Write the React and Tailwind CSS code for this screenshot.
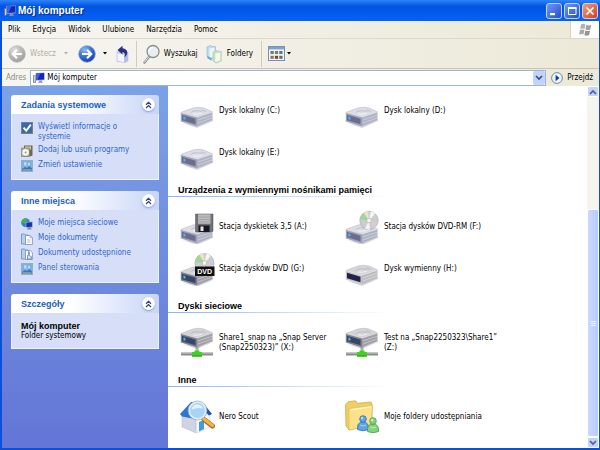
import { useId } from 'react';

/* ---------- Toolbar and title bar icons ---------- */

function ComputerIcon({ className }) {
    return (
        <svg viewBox="0 0 12 12" className={className} aria-hidden="true">
            <path d="M0.5 3.5h2v7h-2z" fill="#c9cfe0" stroke="#56607c" strokeWidth=".6" />
            <path d="M2.5 1l9-.6v7.900L2.500 8.800z" fill="#a9b7e4" />
            <path d="M3.300 1.500l7.900-.5v6.500l-7.900.5z" fill="#1226b8" />
            <path d="M3.300 1.500l4-.3-2.600 6.600-1.400.1z" fill="#3f5fe0" />
            <path d="M6 8.4h3v1.4l1.5 1H4.5L6 9.8z" fill="#8c97b8" />
        </svg>
    );
}

function RoundArrow({ back }) {
    const id = useId();
    return (
        <svg viewBox="0 0 18 18" className="size-[18px] shrink-0" aria-hidden="true">
            <defs>
                <radialGradient id={id} cx=".35" cy=".25" r=".8">
                    <stop offset="0" stopColor={back ? '#e0e0de' : '#8db8f5'} />
                    <stop offset=".5" stopColor={back ? '#b9b9b6' : '#3a72d8'} />
                    <stop offset="1" stopColor={back ? '#9d9d9a' : '#123f9f'} />
                </radialGradient>
            </defs>
            <circle cx="9" cy="9" r="8.3" fill={`url(#${id})`} stroke={back ? '#b4b4b0' : '#7d9bd0'} strokeWidth=".7" />
            <path
                d={back ? 'M14 9H5M9 4.8L4.8 9 9 13.2' : 'M4 9h9M9 4.8L13.2 9 9 13.2'}
                fill="none"
                stroke="#fff"
                strokeWidth="2.2"
            />
        </svg>
    );
}

function Caret({ className }) {
    return (
        <svg viewBox="0 0 4 3" className={`h-[3px] w-1 shrink-0 ${className ?? ''}`} aria-hidden="true">
            <path d="M0 0h4L2 2.6z" fill="currentColor" />
        </svg>
    );
}

function UpIcon() {
    return (
        <svg viewBox="0 0 15 18" className="h-[18px] w-[15px]" aria-hidden="true">
            <path d="M2 7l3-1 8 1.500v8.500l-3 1.500-8-1z" fill="#c3cce8" stroke="#a5b0d4" strokeWidth=".5" />
            <path d="M2.500 8.500L9 9.500v7.500l-6.500-1z" fill="#f4f6fc" />
            <path d="M9.500 9.500l3-1v7l-3 1.500z" fill="#aebbe0" />
            <path d="M9.500 12.500C10.500 9 9.500 7.200 7.500 7v2.400L2.500 5 7.500.8v2.400c5.500.6 6.500 5.300 2 9.300z" fill="#2b2f86" />
        </svg>
    );
}

function SearchIcon() {
    return (
        <svg viewBox="0 0 17 20" className="h-5 w-[17px]" aria-hidden="true">
            <path d="M1.500 18.500l5-6.200" stroke="#9a9a9a" strokeWidth="2.600" strokeLinecap="round" />
            <path d="M1.600 18l4.600-5.600" stroke="#dcdcdc" strokeWidth="1" strokeLinecap="round" />
            <circle cx="10" cy="7.500" r="6" fill="#e9eef2" stroke="#8b8f93" strokeWidth="1.300" />
            <path d="M6.200 7.500A4 4 0 0 1 10 3.600" stroke="#fff" strokeWidth="1.400" fill="none" />
        </svg>
    );
}

function FoldersIcon() {
    return (
        <svg viewBox="0 0 17 20" className="h-5 w-[17px]" aria-hidden="true">
            <path d="M1 3l4-1.600 1 1.200h3.500v11L5 15 1 13z" fill="#bcdcf0" stroke="#8ab4d4" strokeWidth=".6" />
            <path d="M3.500 4.500l5-1v9l-5 1.700z" fill="#eaf6fd" />
            <path d="M1.500 12l4 2v2.800l-4-2.600z" fill="#6fa4d6" />
            <path d="M7 8.200l4-2 1 1.200h3.200v9.600L10 19l-3-2z" fill="#c5e2bd" stroke="#a3c69c" strokeWidth=".6" />
            <path d="M9.300 9.600l5-1v7.800l-5 1.700z" fill="#f1faee" />
        </svg>
    );
}

function ViewsIcon() {
    return (
        <svg viewBox="0 0 17 15" className="h-[15px] w-[17px]" aria-hidden="true">
            <rect x=".5" y=".5" width="16" height="14" fill="#f4f3ea" stroke="#7a8fb8" />
            <rect x="1" y="1" width="15" height="2.400" fill="#7fa0d8" />
            <rect x="2.500" y="5" width="3.200" height="3" fill="#5f7f72" />
            <rect x="6.900" y="5" width="3.200" height="3" fill="#6c8a5e" />
            <rect x="11.300" y="5" width="3.200" height="3" fill="#5b7593" />
            <rect x="2.500" y="9.800" width="3.200" height="3" fill="#8a6b70" />
            <rect x="6.900" y="9.800" width="3.200" height="3" fill="#7a3f3f" />
            <rect x="11.300" y="9.800" width="3.200" height="3" fill="#5c6a7c" />
        </svg>
    );
}

function WindowsFlag() {
    return (
        <svg viewBox="0 0 15 14" className="h-3.5 w-[15px]" aria-hidden="true">
            <path d="M3 1.400q2.200-1.200 4.400 0L6.600 6q-2-1.200-4.400 0z" fill="#b2b2b2" />
            <path d="M8.300 1.800q2.400 1.200 5 0l-1 4.600q-2.400 1.300-4.800 0z" fill="#a2a2a2" />
            <path d="M2 7q2.200-1.200 4.400 0l-.9 4.600q-2.200-1.200-4.500 0z" fill="#a8a8a8" />
            <path d="M7.300 7.400q2.400 1.200 4.800 0l-1 4.600q-2.400 1.300-4.700 0z" fill="#959595" />
        </svg>
    );
}

/* ---------- Sidebar icons ---------- */

function TaskIcon({ kind }) {
    return (
        <svg viewBox="0 0 12 12" className="size-3 shrink-0" aria-hidden="true">
            {kind === 'info' && (
                <>
                    <rect x=".5" y=".5" width="11" height="11" fill="#3b6aa8" stroke="#6d8294" />
                    <path d="M2.600 5.600l2.600 3.200 4.600-6.200" fill="none" stroke="#fff" strokeWidth="1.900" />
                </>
            )}
            {kind === 'programs' && (
                <>
                    <path d="M3 .5h8.500v10L9 11.500H3z" fill="#6c6a4e" />
                    <path d="M4 1.500h6v3H4z" fill="#d9cf96" />
                    <rect x="0" y="3" width="8.600" height="8.600" fill="#a9a79c" stroke="#77756a" strokeWidth=".5" />
                    <circle cx="4.600" cy="7.400" r="3.300" fill="#f3f5ee" />
                    <circle cx="4.600" cy="7.400" r=".9" fill="#8a9a80" />
                </>
            )}
            {kind === 'settings' && (
                <>
                    <rect x=".5" y=".5" width="11" height="11" fill="#7fb0e2" stroke="#8cb0d4" />
                    <path d="M1 9l3-2 2 1 2.400-2L11 8.600V11H1z" fill="#3f74b6" />
                    <path d="M3 2.200h2.600v3.200H3zM7 3h2v2.400H7z" fill="#b9daf4" />
                    <path d="M1.500 10h9" stroke="#c5c3a0" />
                </>
            )}
            {kind === 'network' && (
                <>
                    <circle cx="4.600" cy="4.600" r="4.400" fill="#2d7fd0" />
                    <path d="M2 1.400c2-1.400 4-1 5 .2L5 3.800 4.600 6 2.600 5 .6 5.600C.2 4 .8 2.400 2 1.400z" fill="#49b14a" />
                    <path d="M5 4.400l6.400-.6v5.400L5 9.600z" fill="#1c2fa6" stroke="#b8c4e6" strokeWidth=".6" />
                    <path d="M7 9.600h2.600l1 1.900H6z" fill="#7784ac" />
                </>
            )}
            {(kind === 'documents' || kind === 'shared') && (
                <>
                    <path d="M.5 1h3l1 1H7v9H.5z" fill="#b4cdf2" stroke="#5c80bd" strokeWidth=".7" />
                    <path d="M4.500 2.500h4.600l2.300 2.200v6.800H4.500z" fill="#fff" stroke="#6c83ad" strokeWidth=".7" />
                    {kind === 'documents' ? (
                        <path d="M9 2.600v2.200h2.300M6 7h3.600M6 9h3.600" fill="none" stroke="#8ea3c9" strokeWidth=".7" />
                    ) : (
                        <path d="M6.400 11V7.600l1-.3V3.600l1 .2v4l2 .8V11z" fill="#d5e2f7" stroke="#4e72b4" strokeWidth=".7" />
                    )}
                </>
            )}
        </svg>
    );
}

/* ---------- Drive icons ---------- */

const driveTones = {
    disk: { top: '#dcdde5', side: '#b0b2c6', front: '#a0a2b8', slot: '#6a6e8c' },
    removable: { top: '#d6d6d8', side: '#bdbdc1', front: '#c6c6cb', slot: '#22224a' },
    network: { top: '#d4d4d6', side: '#a0a0a6', front: '#808089', slot: '#36466b' },
};

function DriveBody({ tone = 'disk', y = 0 }) {
    const c = driveTones[tone];
    return (
        <g transform={`translate(0 ${y})`}>
            <path d="M2 30l15 5 16-7V26L17 32z" fill="#8d8fa2" opacity=".35" />
            <path d="M.8 19.500L13 15q6-1.400 11 0l8.500 4L17 24z" fill={c.top} stroke="#b9bac8" strokeWidth=".6" />
            <path d="M.8 19.500L17 24v9.500L.8 28.500z" fill={c.front} />
            <path d="M17 24l15.500-5v8L17 33.500z" fill={c.side} />
            <path d="M18 27l14-4.700M18 30l14-5" stroke="#fff" strokeWidth=".8" opacity=".45" />
            <path d="M2 21.800l13.500 3.900v5.500L2 27.300z" fill={c.slot} />
            <path d="M.8 19.500L17 24l15.500-5" fill="none" stroke="#fff" strokeWidth=".7" opacity=".7" />
            {tone !== 'removable' && <path d="M3.400 23.500l2 .6v2.700l-2-.6z" fill="#53b6ec" />}
            <path d="M11 19.800q0-1.800 5-2t6 1.200" fill="none" stroke="#a9abbb" strokeWidth=".6" />
            <path d="M13 21q5 1 9-1" fill="none" stroke="#f7f7fa" strokeWidth=".8" />
            <path d="M21 16.700l5 1.800" stroke="#a8aab8" strokeWidth=".6" />
        </g>
    );
}

function Disc({ cx, cy, r }) {
    return (
        <g>
            <circle cx={cx} cy={cy} r={r} fill="#cbcdcf" stroke="#a1a4a8" strokeWidth=".6" />
            <path d={`M${cx} ${cy}l${-r} -1A${r} ${r} 0 0 1 ${cx - 5} ${cy - r + 1.6}z`} fill="#a5d39b" />
            <path d={`M${cx} ${cy}L${cx - 5} ${cy - r + 1.6}A${r} ${r} 0 0 1 ${cx - 1} ${cy - r}z`} fill="#ece5bd" />
            <path d={`M${cx} ${cy}L${cx + 2} ${cy - r}A${r} ${r} 0 0 1 ${cx + 6} ${cy - r + 2.5}z`} fill="#f6f6f6" />
            <path d={`M${cx} ${cy}L${cx + r - 0.5} ${cy + 2}A${r} ${r} 0 0 1 ${cx + 5} ${cy + r - 1.8}z`} fill="#dccbd5" />
            <path d={`M${cx} ${cy}L${cx + 1} ${cy + r}A${r} ${r} 0 0 1 ${cx - 4} ${cy + r - 1.2}z`} fill="#f3f3f3" />
            <circle cx={cx} cy={cy} r="2.300" fill="#f5f5f5" stroke="#a9abae" strokeWidth=".6" />
        </g>
    );
}

function NetworkDrive() {
    return (
        <>
            <path d="M1 27.500h32v3H1z" fill="#8c8c8c" />
            <path d="M1 27.500h32v1H1z" fill="#c8c8c8" />
            <path d="M15.500 20h3v7h-3z" fill="#b5b5b5" />
            <path d="M14.500 25.500h5V27h2.500v4.500H12V27h2.500z" fill="#3fd21f" />
            <path d="M12 30.500h10v1H12z" fill="#239a10" />
            <DriveBody tone="network" y={-11} />
        </>
    );
}

function NeroScout() {
    return (
        <>
            <path d="M2 15l14 5v14L2 28z" fill="#d0d4e2" stroke="#a9afc4" strokeWidth=".4" />
            <path d="M16 20l14-6v14l-13 6z" fill="#f7f8fb" stroke="#b5bacb" strokeWidth=".4" />
            <path d="M19 23l5-2v9l-5 2.500z" fill="#3d9be2" />
            <path d="M11 3L0 15l2 2.500L15 20l5-5L24 5z" fill="#2e77cf" />
            <path d="M11 3l13 2 8 10-3 1.500-9-9z" fill="#1d57ad" />
            <path d="M24 20.500l8.500 6.500" stroke="#a86f1c" strokeWidth="5" strokeLinecap="round" />
            <path d="M24 20l8.500 6.500" stroke="#f0b548" strokeWidth="3.400" strokeLinecap="round" />
            <circle cx="17.500" cy="11.500" r="8.400" fill="#a9d5f5" stroke="#e2eaf3" strokeWidth="2" />
            <circle cx="17.500" cy="11.500" r="9.500" fill="none" stroke="#7f9fc6" strokeWidth=".6" />
            <path d="M11.500 10.500q1-5 6-5 4.500.5 5.500 4-5.500-1.500-11.500 1z" fill="#e3f3fe" />
        </>
    );
}

function Person({ x, y, light, dark }) {
    return (
        <g transform={`translate(${x} ${y})`}>
            <path d="M-5.500 10.500q-.8-7.500 5.500-7.500t5.500 7.500q-5.500 2.500-11 0z" fill={light} stroke={dark} strokeWidth=".8" />
            <circle cx="0" cy="0" r="3.300" fill={light} stroke={dark} strokeWidth=".8" />
            <circle cx="-1" cy="-1" r="1.200" fill="#fff" opacity=".6" />
            <path d="M-3 6q3 2 6 0" fill="none" stroke="#fff" strokeWidth=".8" opacity=".6" />
        </g>
    );
}

function SharedFolder() {
    return (
        <>
            <path d="M.5 6L3 2.800l7.500-1 2 2.500L26 3l1 2v21L4 31 1 27z" fill="#f0cf62" stroke="#cfa23a" strokeWidth=".7" />
            <path d="M4 9.500L27.500 6 26 26.500 4 31z" fill="#fbe28a" stroke="#dcb551" strokeWidth=".6" />
            <path d="M5 11l21-3.200" stroke="#fff8d6" strokeWidth="1" />
            <Person x={18} y={20} light="#5ba6e8" dark="#2d6db8" />
            <Person x={28} y={22} light="#86d27f" dark="#4b9a4c" />
        </>
    );
}

function PlaceIcon({ kind }) {
    return (
        <svg viewBox="0 0 35 35" className="size-[35px] shrink-0" aria-hidden="true">
            {kind === 'disk' && <DriveBody />}
            {kind === 'removable' && <DriveBody tone="removable" />}
            {kind === 'floppy' && (
                <>
                    <DriveBody y={1} />
                    <path d="M15.500 5h17.500v17l-1 1H15.500z" fill="#6f7073" stroke="#55565a" strokeWidth=".5" />
                    <path d="M18 5.300h12.500v9.500H18z" fill="#b9babd" />
                    <path d="M18 8h12.500M18 10.500h12.500M18 13h12.500" stroke="#98999d" strokeWidth=".6" />
                    <path d="M18.500 16.500h11V23h-11z" fill="#17181b" />
                    <path d="M20.500 17.500h3V22h-3z" fill="#e8e8ea" />
                </>
            )}
            {kind === 'dvd-rm' && (
                <>
                    <DriveBody y={1} />
                    <Disc cx={24} cy={11.5} r={9.2} />
                </>
            )}
            {kind === 'dvd' && (
                <>
                    <DriveBody tone="network" y={1} />
                    <Disc cx={24.5} cy={12} r={9.5} />
                    <rect x="15" y="15.500" width="19.500" height="9.500" fill="#111" />
                    <text x="24.700" y="22.800" textAnchor="middle" fill="#fff" fontSize="7" fontWeight="700" fontFamily="Liberation Sans, sans-serif">
                        DVD
                    </text>
                </>
            )}
            {kind === 'network' && <NetworkDrive />}
            {kind === 'nero' && <NeroScout />}
            {kind === 'shared' && <SharedFolder />}
        </svg>
    );
}

/* ---------- Data ---------- */

const menus = ['Plik', 'Edycja', 'Widok', 'Ulubione', 'Narzędzia', 'Pomoc'];

const systemTasks = [
    { icon: 'info', label: 'Wyświetl informacje o systemie' },
    { icon: 'programs', label: 'Dodaj lub usuń programy' },
    { icon: 'settings', label: 'Zmień ustawienie' },
];

const otherPlaces = [
    { icon: 'network', label: 'Moje miejsca sieciowe' },
    { icon: 'documents', label: 'Moje dokumenty' },
    { icon: 'shared', label: 'Dokumenty udostępnione' },
    { icon: 'settings', label: 'Panel sterowania' },
];

const groups = [
    {
        items: [
            { icon: 'disk', label: 'Dysk lokalny (C:)' },
            { icon: 'disk', label: 'Dysk lokalny (D:)' },
            { icon: 'disk', label: 'Dysk lokalny (E:)' },
        ],
    },
    {
        title: 'Urządzenia z wymiennymi nośnikami pamięci',
        items: [
            { icon: 'floppy', label: 'Stacja dyskietek 3,5 (A:)' },
            { icon: 'dvd-rm', label: 'Stacja dysków DVD-RM (F:)' },
            { icon: 'dvd', label: 'Stacja dysków DVD (G:)' },
            { icon: 'removable', label: 'Dysk wymienny (H:)' },
        ],
    },
    {
        title: 'Dyski sieciowe',
        items: [
            { icon: 'network', label: 'Share1_snap na „Snap Server (Snap2250323)” (X:)' },
            { icon: 'network', label: 'Test na „Snap2250323\\Share1” (Z:)' },
        ],
    },
    {
        title: 'Inne',
        items: [
            { icon: 'nero', label: 'Nero Scout' },
            { icon: 'shared', label: 'Moje foldery udostępniania' },
        ],
    },
];

const boldText = "font-['Liberation_Sans',sans-serif] text-[9px] font-bold";

/* ---------- Window parts ---------- */

function TitleBar() {
    const button = 'flex size-4 items-center justify-center rounded-[3px] border border-[#c4d4f8]';
    return (
        <header className="flex h-[21px] shrink-0 items-center bg-linear-to-b from-[#2c86f8] via-[#0353e0] via-30% to-[#0462f8] pt-px pr-[2px] pl-1">
            <ComputerIcon className="size-3" />
            <h1 className="ml-[2px] grow font-['Liberation_Sans',sans-serif] text-[10px] font-bold text-white [text-shadow:1px_1px_1px_#0a2a80]">
                Mój komputer
            </h1>
            <div className="flex gap-[2px]">
                <button aria-label="Minimalizuj" className={`${button} bg-linear-to-br from-[#6f97f2] to-[#1f4fd0]`}>
                    <svg viewBox="0 0 12 12" className="size-3" aria-hidden="true">
                        <path d="M2 8h5v2.200H2z" fill="#fff" />
                    </svg>
                </button>
                <button aria-label="Maksymalizuj" className={`${button} bg-linear-to-br from-[#6f97f2] to-[#1f4fd0]`}>
                    <svg viewBox="0 0 12 12" className="size-3" aria-hidden="true">
                        <path d="M2.500 3h7.500v6.500H2.500z" fill="none" stroke="#fff" />
                        <path d="M2 2h8.500v2H2z" fill="#fff" />
                    </svg>
                </button>
                <button aria-label="Zamknij" className={`${button} bg-linear-to-br from-[#f09a7c] to-[#cf3f18]`}>
                    <svg viewBox="0 0 12 12" className="size-3" aria-hidden="true">
                        <path d="M2.500 2.500l7 7M9.500 2.500l-7 7" stroke="#fff" strokeWidth="1.700" />
                    </svg>
                </button>
            </div>
        </header>
    );
}

function MenuBar() {
    return (
        <nav className="flex h-[18px] shrink-0 border-b border-[#dcd9cb]">
            <div className="flex grow items-center gap-3 pl-[6px]">
                {menus.map((menu) => (
                    <button key={menu}>{menu}</button>
                ))}
            </div>
            <div className="flex w-[29px] items-center justify-center border-l border-[#d6d3c4] bg-white">
                <WindowsFlag />
            </div>
        </nav>
    );
}

function ToolBar() {
    return (
        <div className="flex h-[30px] shrink-0 items-center border-b border-[#c9c6b6] pl-[6px]">
            <button className="flex items-center gap-1 text-[#b0ada0]" disabled>
                <RoundArrow back />
                Wstecz
                <Caret className="ml-1" />
            </button>
            <button aria-label="Dalej" className="ml-[10px] flex items-center gap-[7px]">
                <RoundArrow />
                <Caret />
            </button>
            <button aria-label="W górę" className="ml-2">
                <UpIcon />
            </button>
            <div className="mx-[6px] h-[26px] w-px bg-[#cfccbd]" />
            <button className="flex items-center gap-1">
                <SearchIcon />
                Wyszukaj
            </button>
            <button className="ml-2 flex items-center gap-1">
                <FoldersIcon />
                Foldery
            </button>
            <div className="mr-[6px] ml-2 h-[26px] w-px bg-[#cfccbd]" />
            <button aria-label="Widoki" className="flex items-center gap-[2px]">
                <ViewsIcon />
                <Caret />
            </button>
        </div>
    );
}

function AddressBar() {
    return (
        <form className="flex h-[17px] shrink-0 items-center pl-1" onSubmit={(e) => e.preventDefault()}>
            <label htmlFor="address" className="text-[#8d8a7c]">
                Adres
            </label>
            <div className="ml-1 flex h-4 grow items-center border border-[#9fb4cf] bg-white pl-[2px]">
                <ComputerIcon className="size-3 shrink-0" />
                <input id="address" defaultValue="Mój komputer" className="ml-[2px] min-w-0 grow outline-none" />
                <button type="button" aria-label="Pokaż listę adresów" className="flex h-3.5 w-3 items-center justify-center rounded-[2px] bg-[#c3d3fc]">
                    <svg viewBox="0 0 8 6" className="h-[6px] w-2" aria-hidden="true">
                        <path d="M1 1l3 3 3-3" fill="none" stroke="#39507c" strokeWidth="1.700" />
                    </svg>
                </button>
            </div>
            <button type="submit" className="ml-[5px] flex items-center gap-1 pr-[6px]">
                <svg viewBox="0 0 12 12" className="size-3" aria-hidden="true">
                    <circle cx="6" cy="6" r="5.400" fill="#eef4fb" stroke="#6a8cab" />
                    <path d="M4.600 2.800L8.400 6 4.600 9.200z" fill="#123a86" />
                </svg>
                Przejdź
            </button>
        </form>
    );
}

function Panel({ title, children }) {
    return (
        <section className="overflow-hidden rounded-t-[3px]">
            <div className="flex h-[19px] items-center justify-between bg-linear-to-r from-white from-40% to-[#c8d5f7] pr-1 pl-[10px]">
                <h2 className={`${boldText} pt-px text-[#215dc6]`}>{title}</h2>
                <button aria-label={`Zwiń: ${title}`} className="flex size-[13px] items-center justify-center rounded-full bg-white shadow-[0_1px_2px_#8a9bd0]">
                    <svg viewBox="0 0 7 8" className="h-2 w-[7px]" aria-hidden="true">
                        <path d="M1 3.700l2.500-2.400L6 3.700M1 7l2.500-2.400L6 7" fill="none" stroke="#2c3f87" strokeWidth="1.200" />
                    </svg>
                </button>
            </div>
            <div className="border border-t-0 border-[#eef2fd] bg-[#d6dff7] px-[9px] pt-2 pb-[7px]">{children}</div>
        </section>
    );
}

function LinkList({ links }) {
    return (
        <ul className="flex flex-col gap-[3px]">
            {links.map((link) => (
                <li key={link.label}>
                    <a href="#" className="flex gap-[5px] text-[#3166cc]">
                        <TaskIcon kind={link.icon} />
                        <span className="max-w-24">{link.label}</span>
                    </a>
                </li>
            ))}
        </ul>
    );
}

function Sidebar() {
    return (
        <aside className="flex w-[166px] shrink-0 flex-col gap-[11px] bg-linear-to-b from-[#7ba2e7] to-[#6375d6] px-[9px] pt-[9px]">
            <Panel title="Zadania systemowe">
                <LinkList links={systemTasks} />
            </Panel>
            <Panel title="Inne miejsca">
                <LinkList links={otherPlaces} />
            </Panel>
            <Panel title="Szczegóły">
                <p className={boldText}>Mój komputer</p>
                <p>Folder systemowy</p>
            </Panel>
        </aside>
    );
}

function Group({ title, items }) {
    return (
        <section>
            {title && (
                <>
                    <h2 className={`${boldText} mt-[14px] pl-[10px] leading-3`}>{title}</h2>
                    <div className="mb-3 h-px max-w-[222px] bg-linear-to-r from-[#86b4f4] to-white" />
                </>
            )}
            <ul className="grid grid-cols-[repeat(auto-fill,165px)] gap-y-[7px] pl-3">
                {items.map((item) => (
                    <li key={item.label} className="flex items-center gap-1">
                        <PlaceIcon kind={item.icon} />
                        <span className="max-w-[120px]">{item.label}</span>
                    </li>
                ))}
            </ul>
        </section>
    );
}

function ScrollBar() {
    const arrow = 'flex h-[11px] shrink-0 items-center justify-center rounded-[2px] border border-white bg-[#c3d3fc]';
    return (
        <div className="flex w-3 shrink-0 flex-col bg-[#f5f4ee]">
            <button aria-label="Przewiń w górę" className={arrow}>
                <svg viewBox="0 0 8 6" className="h-[6px] w-2" aria-hidden="true">
                    <path d="M1 5l3-3 3 3" fill="none" stroke="#4d6185" strokeWidth="1.700" />
                </svg>
            </button>
            <div className="grow-[114]" />
            <div className="flex grow-[224] flex-col items-center justify-center gap-px rounded-[2px] border border-white bg-linear-to-r from-[#cbd9fd] to-[#b7cafb]">
                <div className="h-px w-[5px] bg-[#eef4fe]" />
                <div className="h-px w-[5px] bg-[#eef4fe]" />
                <div className="h-px w-[5px] bg-[#eef4fe]" />
            </div>
            <button aria-label="Przewiń w dół" className={arrow}>
                <svg viewBox="0 0 8 6" className="h-[6px] w-2" aria-hidden="true">
                    <path d="M1 1l3 3 3-3" fill="none" stroke="#4d6185" strokeWidth="1.700" />
                </svg>
            </button>
        </div>
    );
}

export default function App() {
    return (
        <div className="flex h-screen flex-col overflow-hidden bg-[#0b4fdc] font-['DejaVu_Sans_Condensed','DejaVu_Sans',sans-serif] text-[8px] leading-[10px] text-black">
            <TitleBar />
            <div className="flex min-h-0 grow flex-col pr-px pb-[2px] pl-[2px]">
                <div className="flex shrink-0 flex-col bg-linear-to-r from-[#f6f5f1] to-[#ece9d8]">
                    <MenuBar />
                    <ToolBar />
                    <AddressBar />
                </div>
                <div className="flex min-h-0 grow bg-white">
                    <Sidebar />
                    <main className="min-w-0 grow overflow-hidden pt-[7px]">
                        {groups.map((group) => (
                            <Group key={group.title ?? 'disks'} {...group} />
                        ))}
                    </main>
                    <ScrollBar />
                </div>
            </div>
        </div>
    );
}
